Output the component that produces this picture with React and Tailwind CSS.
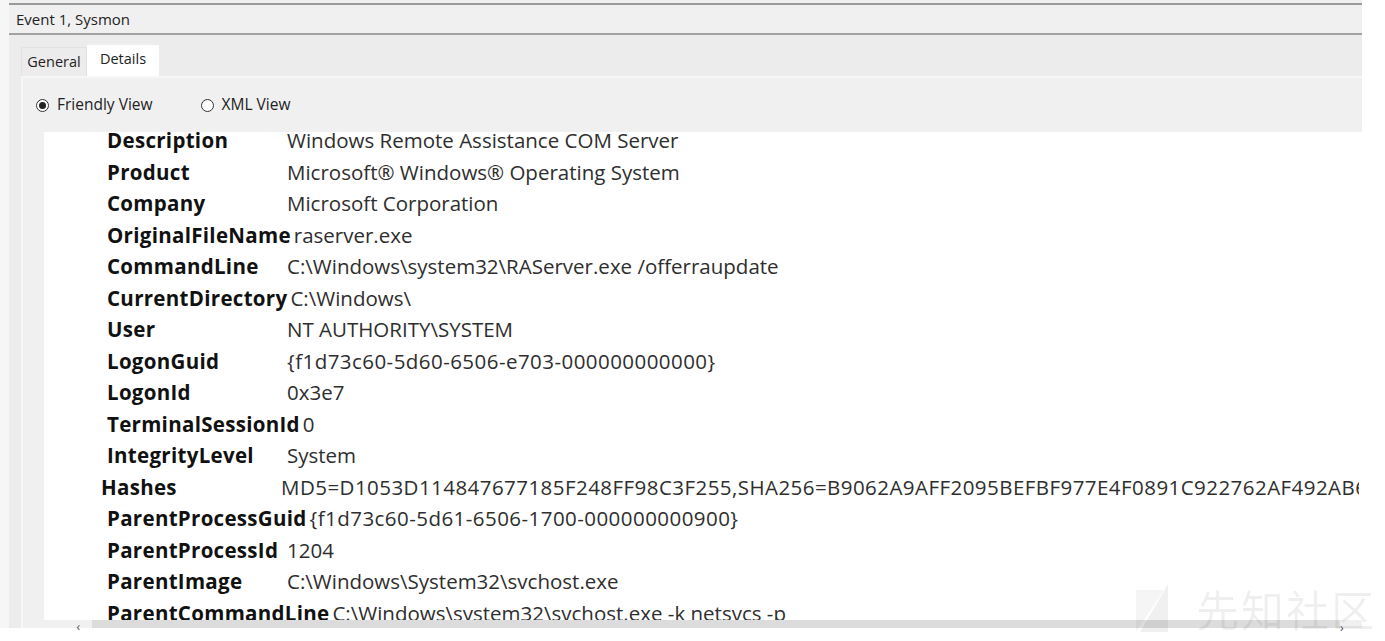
import React from 'react'

const rows = [
  { k: 'Description', v: 'Windows Remote Assistance COM Server' },
  { k: 'Product', v: 'Microsoft® Windows® Operating System' },
  { k: 'Company', v: 'Microsoft Corporation' },
  { k: 'OriginalFileName', v: 'raserver.exe' },
  { k: 'CommandLine', v: 'C:\\Windows\\system32\\RAServer.exe /offerraupdate' },
  { k: 'CurrentDirectory', v: 'C:\\Windows\\' },
  { k: 'User', v: 'NT AUTHORITY\\SYSTEM' },
  { k: 'LogonGuid', v: '{f1d73c60-5d60-6506-e703-000000000000}', wide: true },
  { k: 'LogonId', v: '0x3e7' },
  { k: 'TerminalSessionId', v: '0' },
  { k: 'IntegrityLevel', v: 'System' },
  { k: 'Hashes', v: 'MD5=D1053D114847677185F248FF98C3F255,SHA256=B9062A9AFF2095BEFBF977E4F0891C922762AF492AB6C1D2', shift: true, wide: true },
  { k: 'ParentProcessGuid', v: '{f1d73c60-5d61-6506-1700-000000000900}', wide: true },
  { k: 'ParentProcessId', v: '1204' },
  { k: 'ParentImage', v: 'C:\\Windows\\System32\\svchost.exe' },
  { k: 'ParentCommandLine', v: 'C:\\Windows\\system32\\svchost.exe -k netsvcs -p' },
]

function Radio({ checked, label }) {
  return (
    <div className="flex items-center gap-[8px]">
      <span className="w-[13px] h-[13px] rounded-full border border-[#333] bg-white flex items-center justify-center">
        {checked && <span className="w-[7px] h-[7px] rounded-full bg-[#222]" />}
      </span>
      <span>{label}</span>
    </div>
  )
}

export default function App() {
  return (
    <div className="relative w-[1385px] h-[641px] bg-white overflow-hidden font-['Open_Sans','Noto_Sans',sans-serif] text-[#1a1a1a]">
      <div className="w-[1362px] h-[628px] bg-[#f6f6f6] pl-[9px] flex flex-col">
        <div className="h-[3px] bg-[#f0f0f0]" />
        <div className="h-[2px] bg-[#9a9a9a]" />

        {/* title */}
        <div className="h-[28px] bg-[#f0f0f0] pl-[7px] flex items-center text-[15px] text-[#222]">
          Event 1, Sysmon
        </div>
        <div className="h-[2px] bg-[#a2a2a2]" />

        <div className="flex-1 bg-[#ececec] pl-[12px] flex flex-col">
          {/* tabs */}
          <div className="h-[41px] flex items-end text-[14.5px] text-[#222]">
            <div className="h-[29px] w-[66px] bg-[#ececec] border border-b-0 border-[#e2e2e2] flex items-center justify-center">General</div>
            <div className="h-[31px] w-[72px] bg-white flex items-center justify-center pb-[3px]">Details</div>
          </div>

          {/* panel */}
          <div className="flex-1 bg-[#f0f0f0] border-l-2 border-t-2 border-[#f7f7f7] flex flex-col">
            <div className="h-[54px] flex items-center gap-[48px] pl-[13px] text-[15.5px] text-[#222]">
              <Radio checked label="Friendly View" />
              <Radio label="XML View" />
            </div>

            <div className="ml-[21px] h-[488px] bg-white overflow-hidden">
              <div className="-mt-[7px] w-[1315px] overflow-hidden">
                {rows.map((r) => (
                  <div
                    key={r.k}
                    className={`h-[31.5px] flex items-center whitespace-nowrap text-[20.5px] ${r.shift ? 'pl-[57px]' : 'pl-[63px]'}`}
                  >
                    <span className="min-w-[180px] pr-[3px] font-bold text-[#111] tracking-[0.3px]">{r.k}</span>
                    <span className={`text-[#2e2e2e] ${r.wide ? 'tracking-[0.45px]' : ''}`}>{r.v}</span>
                  </div>
                ))}
              </div>
            </div>

            {/* horizontal scrollbar */}
            <div className="h-[8px] flex items-center">
              <div className="w-[69px] flex justify-end pr-[12px] text-[12px] leading-none text-[#555] -mb-[6px]">‹</div>
              <div className="flex-1 h-[8px] bg-[#dcdcdc]" />
              <div className="w-[22px] text-[12px] leading-none text-[#555] -mb-[8px]">›</div>
            </div>
          </div>
        </div>
      </div>

      {/* watermark */}
      <div className="absolute left-[1134px] top-[582px] flex items-center gap-[14px] pointer-events-none">
        <svg width="48" height="52" viewBox="0 0 48 52">
          <polygon points="2,8 30,8 2,50" fill="#000" fillOpacity="0.04" />
          <polygon points="34,2 34,50 6,50" fill="#000" fillOpacity="0.06" />
        </svg>
        <span className="text-[43px] leading-none text-black/[0.07] font-['Noto_Sans_CJK_SC',sans-serif] tracking-[2px]">先知社区</span>
      </div>
    </div>
  )
}
